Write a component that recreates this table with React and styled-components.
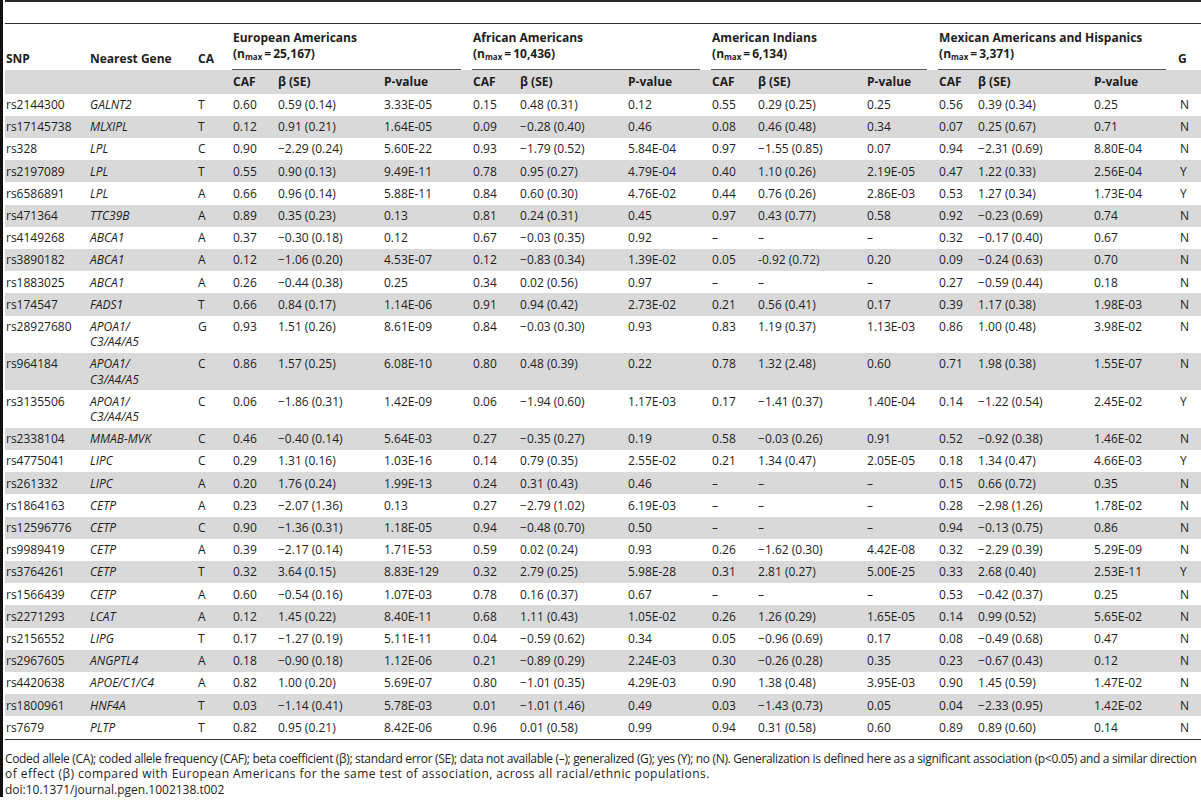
import React from 'react';
import styled, { createGlobalStyle } from 'styled-components';

const GlobalStyle = createGlobalStyle`
  body {
    margin: 0;
    background: #fff;
    color: #1d1d1d;
    font-family: 'Open Sans', 'Noto Sans', sans-serif;
  }
`;

const M = '\u2212';
const D = '\u2013';

const colWidths = [84, 108, 35, 45, 106, 89, 47, 108, 84, 46, 109, 72, 39, 116, 84, 24];

const groups = [
  { name: 'European Americans', n: '25,167' },
  { name: 'African Americans', n: '10,436' },
  { name: 'American Indians', n: '6,134' },
  { name: 'Mexican Americans and Hispanics', n: '3,371' },
];

const rows = [
  ['rs2144300', 'GALNT2', 'T', '0.60', '0.59 (0.14)', '3.33E-05', '0.15', '0.48 (0.31)', '0.12', '0.55', '0.29 (0.25)', '0.25', '0.56', '0.39 (0.34)', '0.25', 'N'],
  ['rs17145738', 'MLXIPL', 'T', '0.12', '0.91 (0.21)', '1.64E-05', '0.09', `${M}0.28 (0.40)`, '0.46', '0.08', '0.46 (0.48)', '0.34', '0.07', '0.25 (0.67)', '0.71', 'N'],
  ['rs328', 'LPL', 'C', '0.90', `${M}2.29 (0.24)`, '5.60E-22', '0.93', `${M}1.79 (0.52)`, '5.84E-04', '0.97', `${M}1.55 (0.85)`, '0.07', '0.94', `${M}2.31 (0.69)`, '8.80E-04', 'N'],
  ['rs2197089', 'LPL', 'T', '0.55', '0.90 (0.13)', '9.49E-11', '0.78', '0.95 (0.27)', '4.79E-04', '0.40', '1.10 (0.26)', '2.19E-05', '0.47', '1.22 (0.33)', '2.56E-04', 'Y'],
  ['rs6586891', 'LPL', 'A', '0.66', '0.96 (0.14)', '5.88E-11', '0.84', '0.60 (0.30)', '4.76E-02', '0.44', '0.76 (0.26)', '2.86E-03', '0.53', '1.27 (0.34)', '1.73E-04', 'Y'],
  ['rs471364', 'TTC39B', 'A', '0.89', '0.35 (0.23)', '0.13', '0.81', '0.24 (0.31)', '0.45', '0.97', '0.43 (0.77)', '0.58', '0.92', `${M}0.23 (0.69)`, '0.74', 'N'],
  ['rs4149268', 'ABCA1', 'A', '0.37', `${M}0.30 (0.18)`, '0.12', '0.67', `${M}0.03 (0.35)`, '0.92', D, D, D, '0.32', `${M}0.17 (0.40)`, '0.67', 'N'],
  ['rs3890182', 'ABCA1', 'A', '0.12', `${M}1.06 (0.20)`, '4.53E-07', '0.12', `${M}0.83 (0.34)`, '1.39E-02', '0.05', '-0.92 (0.72)', '0.20', '0.09', `${M}0.24 (0.63)`, '0.70', 'N'],
  ['rs1883025', 'ABCA1', 'A', '0.26', `${M}0.44 (0.38)`, '0.25', '0.34', '0.02 (0.56)', '0.97', D, D, D, '0.27', `${M}0.59 (0.44)`, '0.18', 'N'],
  ['rs174547', 'FADS1', 'T', '0.66', '0.84 (0.17)', '1.14E-06', '0.91', '0.94 (0.42)', '2.73E-02', '0.21', '0.56 (0.41)', '0.17', '0.39', '1.17 (0.38)', '1.98E-03', 'N'],
  ['rs28927680', 'APOA1/\nC3/A4/A5', 'G', '0.93', '1.51 (0.26)', '8.61E-09', '0.84', `${M}0.03 (0.30)`, '0.93', '0.83', '1.19 (0.37)', '1.13E-03', '0.86', '1.00 (0.48)', '3.98E-02', 'N'],
  ['rs964184', 'APOA1/\nC3/A4/A5', 'C', '0.86', '1.57 (0.25)', '6.08E-10', '0.80', '0.48 (0.39)', '0.22', '0.78', '1.32 (2.48)', '0.60', '0.71', '1.98 (0.38)', '1.55E-07', 'N'],
  ['rs3135506', 'APOA1/\nC3/A4/A5', 'C', '0.06', `${M}1.86 (0.31)`, '1.42E-09', '0.06', `${M}1.94 (0.60)`, '1.17E-03', '0.17', `${M}1.41 (0.37)`, '1.40E-04', '0.14', `${M}1.22 (0.54)`, '2.45E-02', 'Y'],
  ['rs2338104', 'MMAB-MVK', 'C', '0.46', `${M}0.40 (0.14)`, '5.64E-03', '0.27', `${M}0.35 (0.27)`, '0.19', '0.58', `${M}0.03 (0.26)`, '0.91', '0.52', `${M}0.92 (0.38)`, '1.46E-02', 'N'],
  ['rs4775041', 'LIPC', 'C', '0.29', '1.31 (0.16)', '1.03E-16', '0.14', '0.79 (0.35)', '2.55E-02', '0.21', '1.34 (0.47)', '2.05E-05', '0.18', '1.34 (0.47)', '4.66E-03', 'Y'],
  ['rs261332', 'LIPC', 'A', '0.20', '1.76 (0.24)', '1.99E-13', '0.24', '0.31 (0.43)', '0.46', D, D, D, '0.15', '0.66 (0.72)', '0.35', 'N'],
  ['rs1864163', 'CETP', 'A', '0.23', `${M}2.07 (1.36)`, '0.13', '0.27', `${M}2.79 (1.02)`, '6.19E-03', D, D, D, '0.28', `${M}2.98 (1.26)`, '1.78E-02', 'N'],
  ['rs12596776', 'CETP', 'C', '0.90', `${M}1.36 (0.31)`, '1.18E-05', '0.94', `${M}0.48 (0.70)`, '0.50', D, D, D, '0.94', `${M}0.13 (0.75)`, '0.86', 'N'],
  ['rs9989419', 'CETP', 'A', '0.39', `${M}2.17 (0.14)`, '1.71E-53', '0.59', '0.02 (0.24)', '0.93', '0.26', `${M}1.62 (0.30)`, '4.42E-08', '0.32', `${M}2.29 (0.39)`, '5.29E-09', 'N'],
  ['rs3764261', 'CETP', 'T', '0.32', '3.64 (0.15)', '8.83E-129', '0.32', '2.79 (0.25)', '5.98E-28', '0.31', '2.81 (0.27)', '5.00E-25', '0.33', '2.68 (0.40)', '2.53E-11', 'Y'],
  ['rs1566439', 'CETP', 'A', '0.60', `${M}0.54 (0.16)`, '1.07E-03', '0.78', '0.16 (0.37)', '0.67', D, D, D, '0.53', `${M}0.42 (0.37)`, '0.25', 'N'],
  ['rs2271293', 'LCAT', 'A', '0.12', '1.45 (0.22)', '8.40E-11', '0.68', '1.11 (0.43)', '1.05E-02', '0.26', '1.26 (0.29)', '1.65E-05', '0.14', '0.99 (0.52)', '5.65E-02', 'N'],
  ['rs2156552', 'LIPG', 'T', '0.17', `${M}1.27 (0.19)`, '5.11E-11', '0.04', `${M}0.59 (0.62)`, '0.34', '0.05', `${M}0.96 (0.69)`, '0.17', '0.08', `${M}0.49 (0.68)`, '0.47', 'N'],
  ['rs2967605', 'ANGPTL4', 'A', '0.18', `${M}0.90 (0.18)`, '1.12E-06', '0.21', `${M}0.89 (0.29)`, '2.24E-03', '0.30', `${M}0.26 (0.28)`, '0.35', '0.23', `${M}0.67 (0.43)`, '0.12', 'N'],
  ['rs4420638', 'APOE/C1/C4', 'A', '0.82', '1.00 (0.20)', '5.69E-07', '0.80', `${M}1.01 (0.35)`, '4.29E-03', '0.90', '1.38 (0.48)', '3.95E-03', '0.90', '1.45 (0.59)', '1.47E-02', 'N'],
  ['rs1800961', 'HNF4A', 'T', '0.03', `${M}1.14 (0.41)`, '5.78E-03', '0.01', `${M}1.01 (1.46)`, '0.49', '0.03', `${M}1.43 (0.73)`, '0.05', '0.04', `${M}2.33 (0.95)`, '1.42E-02', 'N'],
  ['rs7679', 'PLTP', 'T', '0.82', '0.95 (0.21)', '8.42E-06', '0.96', '0.01 (0.58)', '0.99', '0.94', '0.31 (0.58)', '0.60', '0.89', '0.89 (0.60)', '0.14', 'N'],
];

const Page = styled.div`
  display: flex;
  width: 1201px;
  box-sizing: border-box;
  border-left: 3px solid #111;
  padding-left: 2px;
`;

const Content = styled.div`
  flex: 1;
  min-width: 0;
`;

const TopRule = styled.div`
  height: 2px;
  background: #2a2a2a;
  margin-bottom: 21px;
`;

const Table = styled.table`
  width: 100%;
  table-layout: fixed;
  border-collapse: collapse;
  border-top: 1px solid #333;
  border-bottom: 1px solid #333;
  font-size: 12px;
`;

const HeadCell = styled.th`
  text-align: left;
  vertical-align: bottom;
  font-weight: 700;
  line-height: 16px;
  padding: 6px 0 3px 1px;
`;

const GroupCell = styled(HeadCell)`
  padding: 6px 0 0 0;
`;

const GroupLabel = styled.div`
  margin-right: 11px;
  padding: 0 0 7px 1px;
  border-bottom: 1px solid #555;
`;

const Sub = styled.sub`
  font-size: 8px;
  vertical-align: -2px;
  line-height: 0;
`;

const SubRow = styled.tr`
  background: #d9d9d9;
`;

const SubCell = styled.th`
  text-align: left;
  font-weight: 700;
  line-height: 15.5px;
  padding: 4px 0 4px 1px;
`;

const Row = styled.tr`
  background: ${(p) => (p.$shaded ? '#d9d9d9' : '#fff')};
`;

const Cell = styled.td`
  vertical-align: top;
  line-height: 15.2px;
  padding: 3.5px 0 3.5px ${(p) => (p.$flag ? '3px' : '1px')};
  white-space: pre-line;
  font-style: ${(p) => (p.$italic ? 'italic' : 'normal')};
`;

const Footnote = styled.div`
  margin-top: 11px;
  font-size: 12px;
  line-height: 15.6px;
`;

const NoteLine = styled.div`
  white-space: nowrap;
  letter-spacing: ${(p) => p.$tight || '0'};
`;

const renderRow = (row, index) => (
  <Row key={row[0]} $shaded={index % 2 === 1}>
    {row.map((value, i) => (
      <Cell key={i} $italic={i === 1} $flag={i === row.length - 1}>
        {value}
      </Cell>
    ))}
  </Row>
);

const App = () => (
  <>
    <GlobalStyle />
    <Page>
      <Content>
        <TopRule />
        <Table>
          <colgroup>
            {colWidths.map((w, i) => (
              <col key={i} style={{ width: w }} />
            ))}
          </colgroup>
          <thead>
            <tr>
              <HeadCell>SNP</HeadCell>
              <HeadCell>Nearest Gene</HeadCell>
              <HeadCell>CA</HeadCell>
              {groups.map((g) => (
                <GroupCell key={g.name} colSpan={3}>
                  <GroupLabel>
                    {g.name}
                    <br />
                    (n<Sub>max</Sub>&thinsp;=&thinsp;{g.n})
                  </GroupLabel>
                </GroupCell>
              ))}
              <HeadCell>G</HeadCell>
            </tr>
            <SubRow>
              <SubCell />
              <SubCell />
              <SubCell />
              {groups.map((g) => (
                <React.Fragment key={g.name}>
                  <SubCell>CAF</SubCell>
                  <SubCell>β (SE)</SubCell>
                  <SubCell>P-value</SubCell>
                </React.Fragment>
              ))}
              <SubCell />
            </SubRow>
          </thead>
          <tbody>{rows.map(renderRow)}</tbody>
        </Table>
        <Footnote>
          <NoteLine $tight="-0.34px">
            Coded allele (CA); coded allele frequency (CAF); beta coefficient (β); standard error (SE); data not
            available (–); generalized (G); yes (Y); no (N). Generalization is defined here as a significant
            association (p&lt;0.05) and a similar direction
          </NoteLine>
          <NoteLine $tight="0.45px">
            of effect (β) compared with European Americans for the same test of association, across all
            racial/ethnic populations.
          </NoteLine>
          <NoteLine>doi:10.1371/journal.pgen.1002138.t002</NoteLine>
        </Footnote>
      </Content>
    </Page>
  </>
);

export default App;
